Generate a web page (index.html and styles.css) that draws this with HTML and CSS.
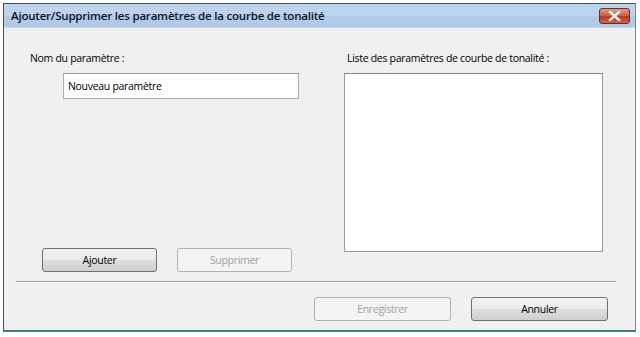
FILE: index.html
```
<!DOCTYPE html>
<html lang="fr">
<head>
<meta charset="utf-8">
<link rel="stylesheet" href="styles.css">
</head>
<body>
<div class="window">
  <div class="titlebar">
    <span class="title">Ajouter/Supprimer les paramètres de la courbe de tonalité</span>
    <span class="close"><svg width="13" height="10" viewBox="0 0 13 10"><path d="M2 1 L11 9 M11 1 L2 9" stroke="#fff" stroke-width="2.4" stroke-linecap="square"/></svg></span>
  </div>
  <div class="content">
    <div class="columns">
      <div class="left">
        <div class="label">Nom du paramètre :</div>
        <div class="input">Nouveau paramètre</div>
        <div class="spacer"></div>
        <div class="btnrow">
          <div class="btn">Ajouter</div>
          <div class="btn disabled">Supprimer</div>
        </div>
      </div>
      <div class="right">
        <div class="label">Liste des paramètres de courbe de tonalité :</div>
        <div class="list"></div>
      </div>
    </div>
    <div class="sep"></div>
    <div class="bottom">
      <div class="btn wide disabled">Enregistrer</div>
      <div class="btn wide">Annuler</div>
    </div>
  </div>
</div>
</body>
</html>
```
FILE: styles.css
```
html, body { margin: 0; padding: 0; }
body {
  width: 640px; height: 337px; background: #ffffff;
  font-family: "Open Sans", "Noto Sans", sans-serif;
  font-size: 10.5px; color: #000;
  overflow: hidden;
}
.window {
  margin: 3px 4px 0 3px;
  height: 329px;
  border: 1px solid #4a4f56;
  border-bottom: 2px solid #3f7c8c;
  border-right: 1px solid #6e8aa0;
  background: #f0f0f0;
  display: flex; flex-direction: column;
  box-sizing: border-box;
}
.titlebar {
  flex: none;
  height: 23px;
  background: #b4cee9;
  box-shadow: inset 0 12px 0 0 #bcd5ee, inset 0 0 0 40px #b0cbe8;
  display: flex; align-items: center; justify-content: space-between;
  padding: 0 5px 0 7px;
  border-bottom: 1px solid #c9dbed;
}
.title { font-size: 11.5px; color: #0a1420; letter-spacing: -0.2px; font-weight: 600; }
.close {
  width: 31px; height: 16px; box-sizing: border-box;
  border: 1px solid #6b2e25; border-radius: 3px;
  background: linear-gradient(#e89a84 0%, #d0644a 45%, #b8361a 55%, #d2644a 100%);
  display: flex; align-items: center; justify-content: center;
}
.content {
  flex: 1; display: flex; flex-direction: column;
  background: #f0f0f0;
  box-shadow: inset 0 0 0 400px #f0f0f0;
}
.columns { display: flex; height: 253px; }
.left {
  width: 310px; display: flex; flex-direction: column;
  padding: 23px 0 0 26px; box-sizing: border-box;
}
.right {
  display: flex; flex-direction: column;
  padding: 23px 0 0 30px; box-sizing: border-box;
}
.right .label { padding-left: 3px; }
.label { height: 15px; line-height: 15px; letter-spacing: -0.3px; }
.input {
  margin: 7px 0 0 33px; width: 236px; height: 26px; box-sizing: border-box;
  border: 1px solid #abadb3; border-top-color: #8e96a3; background: #fff;
  padding-left: 4px; line-height: 24px; letter-spacing: -0.3px;
}
.spacer { flex: 1; }
.btnrow { display: flex; gap: 20px; padding-left: 12px; padding-bottom: 9px; }
.list {
  margin-top: 7px; width: 259px; height: 179px; box-sizing: border-box;
  border: 1px solid #9a9a9a; border-top-color: #828790; background: #fff;
}
.btn {
  width: 115px; height: 24px; box-sizing: border-box;
  border: 1px solid #707070; border-radius: 3px;
  background: linear-gradient(#f2f2f2 0%, #ebebeb 48%, #dddddd 52%, #cfcfcf 100%);
  display: flex; align-items: center; justify-content: center;
  letter-spacing: -0.3px; color: #000;
}
.btn.disabled {
  border-color: #adb2b5; background: #f4f4f4; color: #a0a0a0;
}
.btn.wide { width: 137px; }
.sep {
  margin: 0 19px 0 12px; height: 1px; background: #a0a0a0;
  border-bottom: 1px solid #fff;
}
.bottom {
  display: flex; justify-content: flex-end; gap: 20px;
  padding: 14px 27px 0 0;
}
```
